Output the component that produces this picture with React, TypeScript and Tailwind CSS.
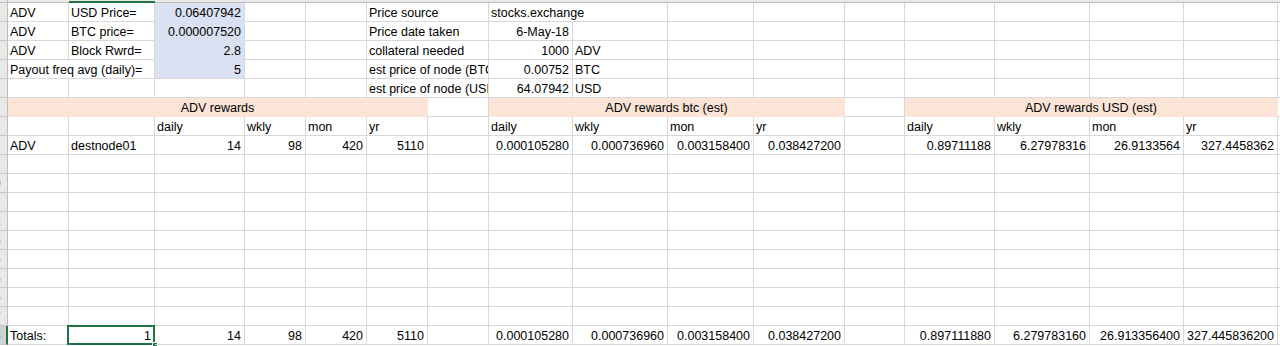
type Align = "l" | "r" | "c";
type Cell = {
  t?: string;
  span?: number;
  a?: Align;
  fill?: "blue" | "blueEnd" | "peach";
  sel?: boolean;
};
type Row = Record<number, Cell>;

const NCOLS = 17;

const btc = ["0.000105280", "0.000736960", "0.003158400", "0.038427200"];
const heads = ["daily", "wkly", "mon", "yr"];

const rows: Row[] = [
  {
    0: { t: "ADV" },
    1: { t: "USD Price=" },
    2: { t: "0.06407942", a: "r", fill: "blue" },
    5: { t: "Price source", span: 2 },
    7: { t: "stocks.exchange", span: 2 },
  },
  {
    0: { t: "ADV" },
    1: { t: "BTC price=" },
    2: { t: "0.000007520", a: "r", fill: "blue" },
    5: { t: "Price date taken", span: 2 },
    7: { t: "6-May-18", a: "r" },
  },
  {
    0: { t: "ADV" },
    1: { t: "Block Rwrd=" },
    2: { t: "2.8", a: "r", fill: "blue" },
    5: { t: "collateral needed", span: 2 },
    7: { t: "1000", a: "r" },
    8: { t: "ADV" },
  },
  {
    0: { t: "Payout freq avg (daily)=", span: 2 },
    2: { t: "5", a: "r", fill: "blueEnd" },
    5: { t: "est price of node (BTC)", span: 2 },
    7: { t: "0.00752", a: "r" },
    8: { t: "BTC" },
  },
  {
    5: { t: "est price of node (USD)", span: 2 },
    7: { t: "64.07942", a: "r" },
    8: { t: "USD" },
  },
  {
    0: { t: "ADV rewards", span: 6, a: "c", fill: "peach" },
    7: { t: "ADV rewards btc (est)", span: 4, a: "c", fill: "peach" },
    12: { t: "ADV rewards USD (est)", span: 4, a: "c", fill: "peach" },
  },
  {
    2: { t: heads[0] },
    3: { t: heads[1] },
    4: { t: heads[2] },
    5: { t: heads[3] },
    7: { t: heads[0] },
    8: { t: heads[1] },
    9: { t: heads[2] },
    10: { t: heads[3] },
    12: { t: heads[0] },
    13: { t: heads[1] },
    14: { t: heads[2] },
    15: { t: heads[3] },
  },
  {
    0: { t: "ADV" },
    1: { t: "destnode01" },
    2: { t: "14", a: "r" },
    3: { t: "98", a: "r" },
    4: { t: "420", a: "r" },
    5: { t: "5110", a: "r" },
    7: { t: btc[0], a: "r" },
    8: { t: btc[1], a: "r" },
    9: { t: btc[2], a: "r" },
    10: { t: btc[3], a: "r" },
    12: { t: "0.89711188", a: "r" },
    13: { t: "6.27978316", a: "r" },
    14: { t: "26.9133564", a: "r" },
    15: { t: "327.4458362", a: "r" },
  },
  {},
  {},
  {},
  {},
  {},
  {},
  {},
  {},
  {},
  {
    0: { t: "Totals:" },
    1: { t: "1", a: "r", sel: true },
    2: { t: "14", a: "r" },
    3: { t: "98", a: "r" },
    4: { t: "420", a: "r" },
    5: { t: "5110", a: "r" },
    7: { t: btc[0], a: "r" },
    8: { t: btc[1], a: "r" },
    9: { t: btc[2], a: "r" },
    10: { t: btc[3], a: "r" },
    12: { t: "0.897111880", a: "r" },
    13: { t: "6.279783160", a: "r" },
    14: { t: "26.913356400", a: "r" },
    15: { t: "327.445836200", a: "r" },
  },
];

const spanClass: Record<number, string> = {
  1: "",
  2: "col-span-2",
  4: "col-span-4",
  6: "col-span-6",
};

function GridCell({ cell }: { cell: Cell }) {
  const align =
    cell.a === "r"
      ? "justify-end pr-[3px]"
      : cell.a === "c"
        ? "justify-center"
        : "justify-start pl-[2px]";
  let colors = "border-r-[#d8d8d8] border-b-[#d8d8d8]";
  if (cell.fill === "blue")
    colors = "bg-[#d9e1f2] border-r-[#d8d8d8] border-b-[#d9e1f2]";
  if (cell.fill === "blueEnd")
    colors = "bg-[#d9e1f2] border-r-[#d8d8d8] border-b-[#d8d8d8]";
  if (cell.fill === "peach")
    colors = "bg-[#fce4d6] border-r-[#fce4d6] border-b-[#fce4d6]";

  return (
    <div
      className={`relative h-[19px] border-r border-b flex items-end pb-px leading-[14px] whitespace-nowrap ${
        cell.sel ? "" : "overflow-hidden"
      } ${spanClass[cell.span ?? 1]} ${align} ${colors}`}
    >
      {cell.t}
      {cell.sel && (
        <>
          <div className="absolute -left-[2px] -top-[1px] -right-[1px] -bottom-[1px] border-2 border-[#217346]" />
          <div className="absolute -right-[4px] -bottom-[4px] w-[6px] h-[6px] bg-[#217346] border border-white" />
        </>
      )}
    </div>
  );
}

function SheetRow({ row, n }: { row: Row; n: number }) {
  const cells = [];
  let c = 0;
  while (c < NCOLS) {
    const cell = row[c] ?? {};
    cells.push(<GridCell key={c} cell={cell} />);
    c += cell.span ?? 1;
  }
  const active = n === 18;
  return (
    <>
      <div
        className={`h-[19px] overflow-hidden border-b border-[#c8c8c8] ${
          active
            ? "bg-[#d2d2d2] border-r-2 border-r-[#217346]"
            : "bg-[#e9e9e9] border-r border-r-[#bdbdbd]"
        }`}
      >
        <div className="w-[25px] -ml-[18px] text-center text-[11px] leading-[18px] text-[#555]">
          {n}
        </div>
      </div>
      {cells}
    </>
  );
}

export default function App() {
  return (
    <div className="w-[1280px] h-[346px] overflow-hidden bg-white text-black text-[12.5px] font-['Liberation_Sans',Arial,sans-serif]">
      <div className="grid grid-cols-[8px_61px_86px_90px_61px_61px_61px_61px_84px_95px_86px_91px_60px_90px_95px_94px_94px_1fr]">
        {/* column header edge */}
        <div className="h-[3px] bg-[#e9e9e9] border-r border-b border-[#bdbdbd]" />
        {Array.from({ length: NCOLS }, (_, i) => (
          <div
            key={i}
            className={
              i === 1
                ? "h-[3px] bg-[#e9e9e9] border-b-2 border-[#217346]"
                : "h-[3px] bg-[#e9e9e9] border-b border-[#bdbdbd]"
            }
          />
        ))}
        {rows.map((r, i) => (
          <SheetRow key={i} row={r} n={i + 1} />
        ))}
      </div>
    </div>
  );
}
